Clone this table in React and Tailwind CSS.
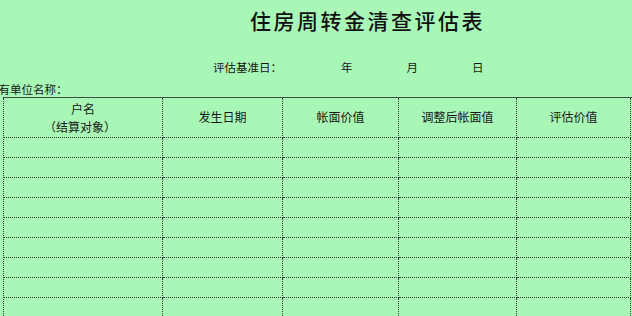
export default function App() {
  const cols = [
    { w: "w-[159px]", label: null },
    { w: "w-[120px]", label: "发生日期" },
    { w: "w-[116px]", label: "帐面价值" },
    { w: "w-[118px]", label: "调整后帐面值" },
    { w: "w-[114px]", label: "评估价值" },
  ];
  const rows = Array.from({ length: 9 });
  const font = { fontFamily: '"Noto Sans CJK SC", "Noto Sans", sans-serif' };
  return (
    <div
      className="w-[632px] h-[316px] overflow-hidden bg-[#a9f7b7] text-[#161616] relative"
      style={font}
    >
      <div className="h-[40px] pl-[250px] pt-[6px]">
        <div className="text-[21px] leading-[28px] font-medium tracking-[2.5px] text-[#111]">
          住房周转金清查评估表
        </div>
      </div>
      <div className="h-[42px] flex items-start pt-[20px] text-[11.5px] leading-[14px]">
        <span className="ml-[213px]">评估基准日：</span>
        <span className="ml-[59px]">年</span>
        <span className="ml-[54px]">月</span>
        <span className="ml-[54px]">日</span>
      </div>
      <div className="h-[15px] text-[11.5px] leading-[14px] -ml-[13px] whitespace-nowrap">所有单位名称：</div>
      <div className="ml-[3px] border-t border-solid border-[#3e4e42]">
        <div className="border-l border-dotted border-[#2a3a2e]">
          <div className="flex h-[40px]">
            {cols.map((c, i) => (
              <div
                key={i}
                className={`${c.w} shrink-0 h-full border-r border-b border-dotted border-[#2a3a2e] flex flex-col items-center justify-center gap-[4px] text-[12px] leading-[14px]`}
              >
                {c.label ? (
                  <span className="mt-[-2px]">{c.label}</span>
                ) : (
                  <>
                    <span>户名</span>
                    <span className="-ml-[6px]">（结算对象）</span>
                  </>
                )}
              </div>
            ))}
          </div>
          {rows.map((_, r) => (
            <div key={r} className="flex h-[20px]">
              {cols.map((c, i) => (
                <div
                  key={i}
                  className={`${c.w} shrink-0 h-full border-r border-b border-dotted border-[#2a3a2e]`}
                />
              ))}
            </div>
          ))}
        </div>
      </div>
    </div>
  );
}
